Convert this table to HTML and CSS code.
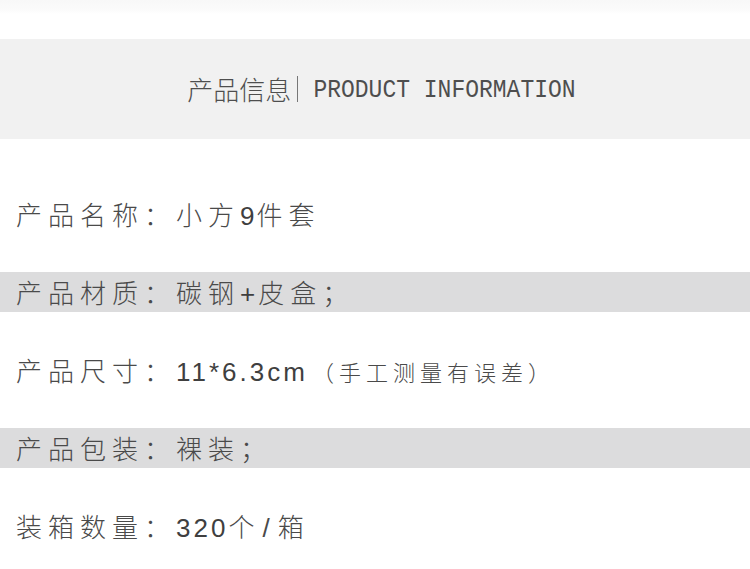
FILE: index.html
```html
<!DOCTYPE html>
<html lang="zh-CN">
<head>
<meta charset="utf-8">
<title>产品信息</title>
<link rel="stylesheet" href="styles.css">
</head>
<body>
<div class="page">
  <div class="top-strip"></div>
  <header class="title-band">
    <span class="title-cn">产品信息</span>
    <span class="title-sep"></span>
    <span class="title-en">PRODUCT INFORMATION</span>
  </header>
  <section class="rows">
    <div class="row">产品名称：小方<span class="num num-tight">9</span>件套</div>
    <div class="row row-grey">产品材质：碳钢<span class="num">+</span>皮盒；</div>
    <div class="row">产品尺寸：<span class="num">11*6.3cm</span><span class="note">（手工测量有误差）</span></div>
    <div class="row row-grey">产品包装：裸装；</div>
    <div class="row">装箱数量：<span class="num">320</span>个<span class="slash">/</span>箱</div>
  </section>
</div>
</body>
</html>
```

FILE: styles.css
```css
html, body {
  margin: 0;
  padding: 0;
  background: #ffffff;
}

.page {
  width: 750px;
  height: 569px;
  overflow: hidden;
  display: flex;
  flex-direction: column;
}

.top-strip {
  height: 39px;
  background: linear-gradient(to bottom, #f8f8f8 0px, #fbfbfb 10px, #ffffff 14px);
}

.title-band {
  height: 100px;
  background: #f1f1f1;
  display: flex;
  align-items: center;
  justify-content: center;
  padding-left: 13px;
  color: #4e4e4e;
}

.title-cn {
  font-family: "Noto Sans CJK SC", sans-serif;
  font-size: 26px;
  font-weight: 300;
  line-height: 1;
}

.title-sep {
  width: 1px;
  height: 26px;
  background: #777777;
  margin: 0 15px 0 6px;
}

.title-en {
  font-family: "Liberation Mono", monospace;
  font-size: 23px;
  line-height: 1;
  letter-spacing: 0;
  display: inline-block;
  transform: scaleY(1.12);
  margin-top: 3px;
}

.rows {
  display: flex;
  flex-direction: column;
  gap: 38px;
  margin-top: 55px;
}

.row {
  height: 40px;
  line-height: 40px;
  padding-left: 16px;
  font-family: "Noto Sans CJK SC", sans-serif;
  font-size: 26px;
  font-weight: 300;
  letter-spacing: 6px;
  color: #4a4a4a;
  white-space: nowrap;
}

.row-grey {
  background: #dcdcdd;
}

.num {
  font-family: "Liberation Sans", "Noto Sans CJK SC", sans-serif;
  letter-spacing: 3px;
  font-weight: 400;
  color: #3f3f3f;
}

.num-tight {
  letter-spacing: 2px;
}

.slash {
  font-family: "Liberation Sans", sans-serif;
  letter-spacing: 8px;
  margin-left: 2px;
}

.note {
  font-size: 22px;
  letter-spacing: 5px;
  margin-left: 4px;
}
```
